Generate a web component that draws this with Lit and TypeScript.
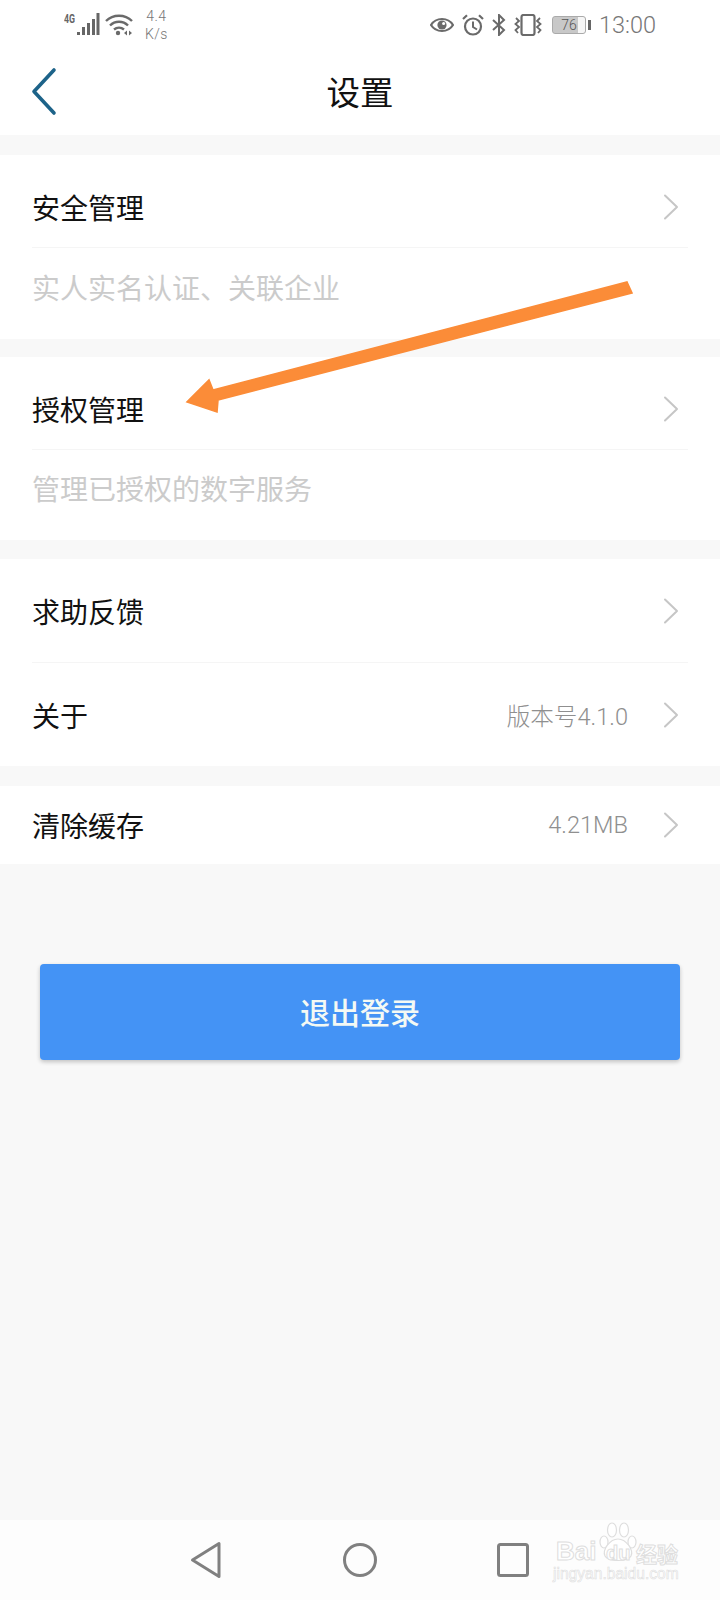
import { LitElement, html, css, nothing, svg } from "lit";
import { customElement } from "lit/decorators.js";

type Row = { label: string; h: number; kind?: "lead" | "sub"; value?: string };

const groups: Row[][] = [
  [
    { label: "安全管理", h: 92, kind: "lead" },
    { label: "实人实名认证、关联企业", h: 92, kind: "sub" },
  ],
  [
    { label: "授权管理", h: 92, kind: "lead" },
    { label: "管理已授权的数字服务", h: 91, kind: "sub" },
  ],
  [
    { label: "求助反馈", h: 103 },
    { label: "关于", h: 104, value: "版本号4.1.0" },
  ],
  [{ label: "清除缓存", h: 78, value: "4.21MB" }],
];

const chevron = html`<svg class="chevron" width="16" height="26" viewBox="0 0 16 26">
  <path d="M2 1.5 L14 13 L2 24.5" fill="none" stroke="#c6c6c6" stroke-width="2" stroke-linecap="round" stroke-linejoin="round" />
</svg>`;

@customElement("app-root")
export class AppRoot extends LitElement {
  static styles = css`
    :host {
      display: block;
      width: 720px;
      height: 1600px;
      font-family: "Noto Sans CJK SC", Roboto, sans-serif;
    }

    .page {
      position: relative;
      height: 100%;
      background: #f8f8f8;
      display: flex;
      flex-direction: column;
      overflow: hidden;
    }

    .top {
      background: #fff;
      height: 135px;
      flex: none;
    }

    .status {
      height: 50px;
      display: flex;
      align-items: center;
      padding: 0 64px;
      color: #6f6f6f;
    }

    .status svg {
      display: block;
      flex: none;
    }

    .speed {
      margin-left: 12px;
      font: 300 14px/18px Roboto, sans-serif;
      letter-spacing: 0.4px;
      color: #777;
      text-align: center;
    }

    .status-right {
      margin-left: auto;
      display: flex;
      align-items: center;
      gap: 8px;
    }

    .battery {
      width: 34px;
      height: 18px;
      box-sizing: border-box;
      border: 1px solid #aaa;
      border-radius: 3px;
      margin-left: 2px;
      font: 300 14px/16px Roboto, sans-serif;
      color: #555;
      text-align: center;
      background: linear-gradient(to right, #c8c8c8 78%, #f6f6f6 78%);
    }

    .battery-nub {
      width: 3px;
      height: 10px;
      background: #666;
      margin-left: -6px;
    }

    .time {
      font: 300 23.5px/28px Roboto, sans-serif;
      color: #777;
    }

    .nav {
      height: 85px;
      position: relative;
      display: flex;
      align-items: center;
      justify-content: center;
    }

    .back {
      position: absolute;
      left: 30px;
      top: 17px;
    }

    .title {
      font-size: 33.5px;
      color: #111;
      line-height: 44px;
      margin-top: -3px;
    }

    .group {
      background: #fff;
      margin-top: 20px;
      flex: none;
    }

    .group.g2 {
      margin-top: 18px;
    }

    .group.g3 {
      margin-top: 19px;
    }

    .row {
      display: flex;
      align-items: center;
      margin: 0 32px;
      box-sizing: border-box;
    }

    .row + .row {
      border-top: 1px solid #f5f5f5;
    }

    .row.lead {
      padding-top: 12px;
    }

    .row.sub {
      padding-bottom: 14px;
    }

    .label {
      font-size: 28px;
      line-height: 40px;
      color: #111;
    }

    .row.sub .label {
      color: #cbcbcb;
    }

    .value {
      margin-left: auto;
      font-family: Roboto, "Noto Sans CJK SC", sans-serif;
      font-weight: 300;
      font-size: 23.6px;
      color: #8f8f8f;
    }

    .chevron {
      flex: none;
      margin-left: 35px;
      margin-right: 9px;
    }

    .row.plain .chevron {
      margin-left: auto;
    }

    .logout {
      margin: 100px 40px 0;
      height: 96px;
      box-sizing: border-box;
      padding-bottom: 2px;
      background: #4493f5;
      border-radius: 4px;
      box-shadow: 0 2px 4px rgba(0, 0, 0, 0.22);
      display: flex;
      align-items: center;
      justify-content: center;
      color: #f4f9f4;
      font-size: 30px;
      font-weight: 500;
      flex: none;
    }

    .spacer {
      flex: 1;
    }

    .navbar {
      height: 80px;
      background: #fdfdfd;
      flex: none;
      display: flex;
      align-items: center;
      padding: 0 0 0 190px;
      gap: 120px;
    }

    .navbar svg {
      display: block;
      flex: none;
    }

    .navbar .square {
      margin-left: -1px;
    }

    .arrow {
      position: absolute;
      left: 0;
      top: 0;
      pointer-events: none;
    }

    .watermark {
      position: absolute;
      left: 552px;
      top: 1522px;
      width: 132px;
      height: 62px;
      color: #fff;
      -webkit-text-stroke: 1px #dedede;
      font-family: "Liberation Sans", sans-serif;
      font-weight: 700;
    }

    .watermark span {
      position: absolute;
      white-space: nowrap;
    }

    .wm-main {
      top: 14px;
      left: 4px;
      font-size: 26px;
      line-height: 30px;
    }

    .wm-du {
      top: 21px;
      left: 54px;
      font-size: 20px;
      line-height: 20px;
    }

    .wm-cn {
      top: 18px;
      left: 84px;
      font-family: "Noto Sans CJK SC", sans-serif;
      font-size: 21px;
      line-height: 26px;
    }

    .wm-url {
      top: 43px;
      left: 1px;
      font-size: 15.6px;
      line-height: 18px;
      font-weight: 400;
      -webkit-text-stroke: 0.6px #dedede;
    }

    .wm-paw {
      position: absolute;
      left: 47px;
      top: 0;
    }
  `;

  renderStatus() {
    return html`<div class="status">
      <svg width="36" height="24" viewBox="0 0 36 24">
        <text x="0" y="10" font-family="Roboto, sans-serif" font-weight="700" font-size="12" textLength="11" lengthAdjust="spacingAndGlyphs" fill="#666">4G</text>
        <rect x="13" y="19" width="3" height="3" fill="#666" />
        <rect x="18" y="14" width="3" height="8" fill="#666" />
        <rect x="23" y="10" width="3" height="12" fill="#666" />
        <rect x="28" y="6" width="3" height="16" fill="#666" />
        <rect x="32.5" y="0" width="3" height="22" fill="#666" />
      </svg>
      <svg style="margin-left:5px" width="28" height="22" viewBox="0 0 28 22">
        <path d="M1 7 C8 0 20 0 27 7" fill="none" stroke="#6a6a6a" stroke-width="2.4" />
        <path d="M5 11.5 C10 6.5 18 6.5 23 11.5" fill="none" stroke="#6a6a6a" stroke-width="2.4" />
        <path d="M9 15.5 C12 13 16 13 19 15.5" fill="none" stroke="#6a6a6a" stroke-width="2.4" />
        <circle cx="13" cy="19" r="2.2" fill="#6a6a6a" />
        <path d="M19 19 L22 16.5 V21.5 Z M24 16.5 L27 19 L24 21.5 Z" fill="#6a6a6a" />
      </svg>
      <div class="speed">4.4<br />K/s</div>
      <div class="status-right">
        <svg width="24" height="18" viewBox="0 0 24 18">
          <path d="M1 9 C6 1 18 1 23 9 C18 17 6 17 1 9 Z" fill="none" stroke="#6a6a6a" stroke-width="2.2" />
          <circle cx="12" cy="9" r="4.6" fill="#6a6a6a" />
          <circle cx="13.6" cy="7.4" r="1.5" fill="#fff" />
        </svg>
        <svg width="22" height="22" viewBox="0 0 22 22">
          <circle cx="11" cy="12.5" r="8" fill="none" stroke="#6a6a6a" stroke-width="2.2" />
          <path d="M11 7.5 V13 L15 15.5" fill="none" stroke="#6a6a6a" stroke-width="2" />
          <path d="M1 5 L5 1.2 M21 5 L17 1.2" stroke="#6a6a6a" stroke-width="2.2" />
        </svg>
        <svg width="14" height="22" viewBox="0 0 14 22">
          <path d="M1 6 L12 16 L7 21 V1 L12 6 L1 16" fill="none" stroke="#6a6a6a" stroke-width="2" />
        </svg>
        <svg width="28" height="22" viewBox="0 0 28 22">
          <rect x="7.5" y="1" width="13" height="20" rx="2" fill="none" stroke="#6a6a6a" stroke-width="2.2" />
          <path d="M2 4 L5 7 L1.5 10 L5 13 L1.5 16 L4 19 M26 4 L23 7 L26.5 10 L23 13 L26.5 16 L24 19" fill="none" stroke="#6a6a6a" stroke-width="1.8" />
        </svg>
        <div class="battery">76</div>
        <div class="battery-nub"></div>
        <div class="time">13:00</div>
      </div>
    </div>`;
  }

  renderRow(row: Row) {
    return html`<div class="row ${row.kind ?? ""} ${row.value ? "" : "plain"}" style="height:${row.h}px">
      <span class="label">${row.label}</span>
      ${row.value ? html`<span class="value">${row.value}</span>` : nothing}
      ${row.kind === "sub" ? nothing : chevron}
    </div>`;
  }

  render() {
    return html`<div class="page">
      <div class="top">
        ${this.renderStatus()}
        <div class="nav">
          <svg class="back" width="28" height="50" viewBox="0 0 28 50">
            <path d="M24 3 L4 24.5 L24 46" fill="none" stroke="#1d6389" stroke-width="3.6" stroke-linecap="round" stroke-linejoin="round" />
          </svg>
          <div class="title">设置</div>
        </div>
      </div>

      ${groups.map(
        (rows, i) => html`<div class="group ${i === 1 ? "g2" : ""} ${i === 2 ? "g3" : ""}">${rows.map((r) => this.renderRow(r))}</div>`
      )}

      <div class="logout">退出登录</div>
      <div class="spacer"></div>

      <div class="navbar">
        <svg width="32" height="38" viewBox="0 0 32 38">
          <path d="M29 2.5 V35.5 L2.5 19 Z" fill="none" stroke="#808080" stroke-width="3" stroke-linejoin="round" />
        </svg>
        <svg width="36" height="36" viewBox="0 0 36 36">
          <circle cx="18" cy="18" r="15.5" fill="none" stroke="#808080" stroke-width="3" />
        </svg>
        <svg class="square" width="32" height="34" viewBox="0 0 32 34">
          <rect x="1.5" y="1.5" width="29" height="31" rx="2" fill="none" stroke="#808080" stroke-width="3" />
        </svg>
      </div>

      <svg class="arrow" width="720" height="500" viewBox="0 0 720 500">
        ${svg`<path d="M627 282 L632 293 L218 400 L217 412 L187 402 L209 380 L213 390 Z" fill="#fb8c38" stroke="#fb8c38" stroke-width="1.6" />`}
      </svg>

      <div class="watermark">
        <svg class="wm-paw" width="38" height="40" viewBox="0 0 38 40">
          <g fill="#fff" stroke="#dedede" stroke-width="1.2">
            <ellipse cx="5" cy="20" rx="4" ry="6" />
            <ellipse cx="13" cy="8" rx="4.5" ry="7" />
            <ellipse cx="25" cy="8" rx="4.5" ry="7" />
            <ellipse cx="33" cy="20" rx="4" ry="6" />
            <path d="M19 17 C11 17 3 28 6 34 C9 40 29 40 32 34 C35 28 27 17 19 17 Z" />
          </g>
        </svg>
        <span class="wm-main">Bai</span>
        <span class="wm-du">du</span>
        <span class="wm-cn">经验</span>
        <span class="wm-url">jingyan.baidu.com</span>
      </div>
    </div>`;
  }
}
